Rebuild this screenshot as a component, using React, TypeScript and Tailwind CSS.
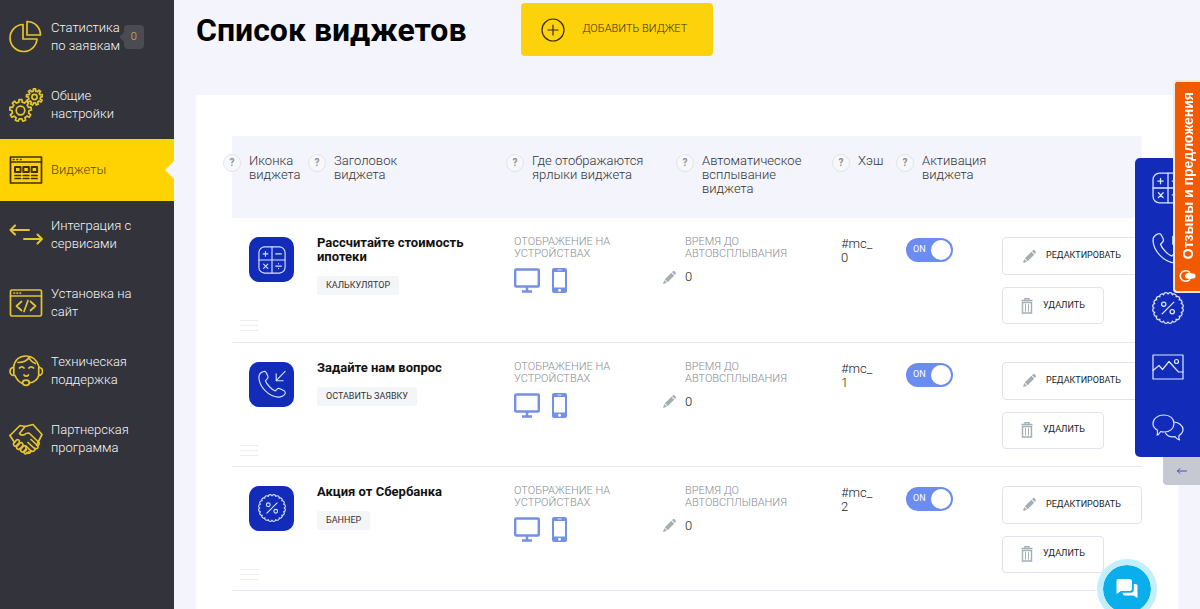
import { useState, type ReactNode } from "react"

type WidgetKind = "calc" | "call" | "percent"

interface Widget {
  id: number
  title: string
  type: string
  kind: WidgetKind
}

const widgets: Widget[] = [
  { id: 0, title: "Рассчитайте стоимость ипотеки", type: "Калькулятор", kind: "calc" },
  { id: 1, title: "Задайте нам вопрос", type: "Оставить заявку", kind: "call" },
  { id: 2, title: "Акция от Сбербанка", type: "Баннер", kind: "percent" },
]

// points for round shapes with a wavy or toothed edge
function scallop(c: number, r: number, count: number) {
  const at = (i: number) => {
    const a = (i / count) * Math.PI * 2
    return `${(c + r * Math.cos(a)).toFixed(2)} ${(c + r * Math.sin(a)).toFixed(2)}`
  }
  const bump = ((Math.PI * r) / count) * 1.02
  let d = `M${at(0)}`
  for (let i = 1; i <= count; i++) d += `A${bump.toFixed(2)} ${bump.toFixed(2)} 0 0 1 ${at(i)}`
  return d + "Z"
}

function gear(cx: number, cy: number, inner: number, outer: number, teeth: number) {
  const step = (Math.PI * 2) / teeth
  const pt = (r: number, a: number) => `${(cx + r * Math.cos(a)).toFixed(2)} ${(cy + r * Math.sin(a)).toFixed(2)}`
  const parts: string[] = []
  for (let i = 0; i < teeth; i++) {
    const a = i * step - Math.PI / 2
    parts.push(pt(inner, a - step * 0.28), pt(outer, a - step * 0.19), pt(outer, a + step * 0.19), pt(inner, a + step * 0.28))
  }
  return `M${parts.join("L")}Z`
}

function LineIcon({ children, className, box = 34, stroke = 1.7 }: { children: ReactNode; className: string; box?: number; stroke?: number }) {
  return (
    <svg
      viewBox={`0 0 ${box} ${box}`}
      className={className}
      fill="none"
      stroke="currentColor"
      strokeWidth={stroke}
      strokeLinecap="round"
      strokeLinejoin="round"
      aria-hidden="true"
    >
      {children}
    </svg>
  )
}

const menuIcons = {
  stats: (
    <>
      <path d="M14 4.500A13.500 13.500 0 1 0 28 19H14Z" />
      <path d="M18 1.500V15H31.500A13.500 13.500 0 0 0 18 1.500Z" />
    </>
  ),
  settings: (
    <>
      <path d={gear(11.5, 22.5, 8.5, 11, 9)} />
      <circle cx="11.5" cy="22.5" r="4.3" />
      <path d={gear(25.5, 9, 6, 8.2, 9)} />
      <circle cx="25.5" cy="9" r="2.6" />
    </>
  ),
  widgets: (
    <>
      <path d="M1.500 4H32.500V30H1.500Z" />
      <path d="M1.500 9H32.500M4.500 6.500H5M8 6.500H8.500M11.500 6.500H12" />
      <path d="M6 14H11.500V19H6ZM14.300 14H19.800V19H14.300ZM22.600 14H28.100V19H22.600Z" strokeWidth="2" />
      <path d="M6 22.500H11.500M14.300 22.500H19.800M22.600 22.500H28.100M6 25.500H11.500M14.300 25.500H19.800M22.600 25.500H28.100" />
    </>
  ),
  integration: <path d="M20 12H1.500M6 7.500L1.500 12L6 16.500M15 21H33M28.500 16.500L33 21L28.500 25.500" strokeWidth="2" />,
  install: (
    <>
      <rect x="1.5" y="4" width="31" height="26" rx="1.5" />
      <path d="M1.500 10H32.500M5 7H5.500M8 7H8.500M11 7H11.500M12.500 15.500L7.500 20L12.500 24.500M21.500 15.500L26.500 20L21.500 24.500M19 14.500L15 25.500" />
    </>
  ),
  support: (
    <>
      <path d="M4.500 13C6 5.500 11 2 17 2S28 6 30 13M6 21.500C7.500 25 9.500 27.500 12.500 29M30 21C28.500 25.500 25 28.500 20 29" />
      <path d="M4.800 13.500C2 13.500 1 15.500 1 17.500S2.500 21.500 4.800 21.500ZM29.700 13.500C32.500 13.500 33.500 15.500 33.500 17.500S32 21.500 29.700 21.500Z" />
      <path d="M9 8.500C14 8.500 18 7 20 3.500C21 6 23 8 26.500 9.500" />
      <path d="M10.500 14C11.500 12.500 14 12.500 15 14M20 14C21 12.500 23.500 12.500 24.500 14M15 21C16 22.500 18.500 22.500 19.500 21" />
      <ellipse cx="17" cy="28.8" rx="3.4" ry="2.6" />
    </>
  ),
  partner: (
    <>
      <path d="M1 13.500L11 3.500L16 4.500L24 2.500L33 12.500L28.500 21.500" />
      <path d="M16 4.500L10.500 11.500C12 14 15 13.500 17 11.500L20 11L30 20.500C31 22.500 29 24 27.500 23" />
      <path d="M1 13.500L5.500 20.500M22 17.500L29 24C29.500 26.500 27 27.500 25.500 26M19 20.500L26 27C26 29.500 23.500 30 22 28.500M17 24L22 29C21.500 31.500 19.500 31.500 18 30.500" />
      <path d="M7.500 18L4.500 21.500C4 24 6.500 25 7.500 23.500L10.500 20.500C10.500 18 9 17 7.500 18ZM11 21L7.500 25C7.500 27.500 10 28 11 26.500L14 23.500C14 21 12.500 20 11 21ZM14.500 24L11.500 27.500C11.500 30 13.500 30.500 14.500 29.500L17 27C17.500 25 16 23 14.500 24ZM17.500 27.500L15 30.500C15.500 32.500 17.500 32 18.500 31L20 29.500" />
    </>
  ),
}

const menu: { label: string[]; icon: keyof typeof menuIcons; count?: number; active?: boolean }[] = [
  { label: ["Статистика", "по заявкам"], icon: "stats", count: 0 },
  { label: ["Общие", "настройки"], icon: "settings" },
  { label: ["Виджеты"], icon: "widgets", active: true },
  { label: ["Интеграция с", "сервисами"], icon: "integration" },
  { label: ["Установка на", "сайт"], icon: "install" },
  { label: ["Техническая", "поддержка"], icon: "support" },
  { label: ["Партнерская", "программа"], icon: "partner" },
]

const columns = [
  { label: ["Иконка", "виджета"], width: "w-[68px]" },
  { label: ["Заголовок", "виджета"], width: "w-[198px]" },
  { label: ["Где отображаются", "ярлыки виджета"], width: "w-[170px]" },
  { label: ["Автоматическое", "всплывание", "виджета"], width: "w-[156px]" },
  { label: ["Хэш"], width: "w-[64px]" },
  { label: ["Активация", "виджета"], width: "w-[98px]" },
]

function Lines({ items }: { items: string[] }) {
  return (
    <>
      {items.map((line) => (
        <span key={line} className="block whitespace-nowrap">
          {line}
        </span>
      ))}
    </>
  )
}

function WidgetGlyph({ kind, className }: { kind: WidgetKind; className: string }) {
  return (
    <LineIcon className={className} box={30} stroke={1.2}>
      {kind === "calc" && (
        <>
          <rect x="1" y="1" width="28" height="28" rx="6" />
          <path d="M15 1V29M1 15H29M5.500 8.500H10.500M8 6V11M19 8.500H25M6 19.500L10.500 24M10.500 19.500L6 24M19 21.500H25M22 18.800V19M22 24V24.200" />
        </>
      )}
      {kind === "call" && (
        <>
          <path d="M5 2C2.500 3 .800 5.500 1 8.500C1.500 18 11.500 28.500 21.500 29C24.500 29.200 28 27.500 29 25.500C29.500 24 29 22.800 27.500 22L23.500 20C22 19.300 21 19.600 20.200 20.700L18.500 22.500C15 21.500 9 15 8 11.500L9.800 9.600C10.800 8.600 11 7.500 10.500 6.300L8.700 2.800C8 1.500 6.500 1.300 5 2Z" />
          <path d="M29 1.500L19.500 11.500M19.500 4V11.500H27" />
        </>
      )}
      {kind === "percent" && (
        <>
          <path d={scallop(15, 13, 20)} />
          <path d="M20.500 9.500L9.500 20.500" />
          <circle cx="11" cy="11.5" r="2" />
          <circle cx="19" cy="18.5" r="2" />
        </>
      )}
    </LineIcon>
  )
}

function PencilIcon() {
  return (
    <svg viewBox="0 0 14 14" className="h-[13px] w-[13px] shrink-0 text-[#a5aeb2]" fill="currentColor" aria-hidden="true">
      <path d="M0 14L1.300 9.800L4.200 12.700ZM2 9L9 2L12 5L5 12ZM9.800 1.300L10.700.400C11.200-.1 12-.1 12.500.4L13.600 1.500C14.100 2 14.100 2.800 13.600 3.300L12.700 4.200Z" />
    </svg>
  )
}

function TrashIcon() {
  return (
    <svg viewBox="0 0 12 16" className="h-4 w-3 shrink-0 text-[#a3afb5]" fill="none" stroke="currentColor" aria-hidden="true">
      <path d="M.5 2.500H11.500M4 2V.700H8V2" strokeWidth="1.3" />
      <path d="M1.500 4.500H10.500V15H1.500Z" strokeWidth="1.4" />
      <path d="M4.500 6V13.500M7.500 6V13.500" />
    </svg>
  )
}

function Devices() {
  return (
    <div className="mt-2 flex gap-3 text-[#7490e6]">
      <svg viewBox="0 0 26 25" className="h-[25px] w-[26px]" fill="none" stroke="currentColor" role="img" aria-label="Компьютер">
        <rect x="1.2" y="1.5" width="23.6" height="17" rx="1" strokeWidth="2.4" />
        <path d="M13 19V23M8 23.500H18" strokeWidth="2.5" />
      </svg>
      <svg viewBox="0 0 15 25" className="h-[25px] w-[15px]" role="img" aria-label="Телефон">
        <rect width="15" height="25" rx="2" fill="currentColor" />
        <path d="M2 4H13V19.500H2Z" fill="#fff" />
        <path d="M5.500 2H9.500" stroke="#fff" strokeWidth=".8" />
        <circle cx="7.5" cy="22.2" r="1.5" fill="#fff" />
      </svg>
    </div>
  )
}

function Sidebar() {
  return (
    <aside className="w-[174px] shrink-0 bg-[#32333b] pt-[3px]">
      <nav>
        {menu.map((item) => (
          <a
            key={item.icon}
            href="#"
            className={`relative flex items-center gap-2 pl-[9px] text-[13px] leading-[18px] font-light ${
              item.active ? "min-h-[62px] bg-[#ffd302] text-[#5b4612]" : "min-h-[68px] text-[#f6f6f6]"
            }`}
          >
            <LineIcon className={`h-[34px] w-[34px] shrink-0 ${item.active ? "text-[#40300c]" : "text-[#e5c52c]"}`}>
              {menuIcons[item.icon]}
            </LineIcon>
            <span>
              <Lines items={item.label} />
            </span>
            {item.count !== undefined && (
              <span className="relative -ml-1 flex h-6 w-5 items-center justify-center rounded bg-[#4b4c52] text-[11px] text-[#dcc04a]">
                <span className="absolute -left-[3px] h-2 w-2 rotate-45 bg-[#4b4c52]" />
                <span className="relative">{item.count}</span>
              </span>
            )}
            {item.active && (
              <svg viewBox="0 0 9 18" className="absolute right-0 h-[18px] w-[9px]" aria-hidden="true">
                <path d="M9 0L0 9L9 18Z" fill="#f3f4fc" />
              </svg>
            )}
          </a>
        ))}
      </nav>
    </aside>
  )
}

function HelpButton() {
  return (
    <button
      type="button"
      aria-label="Подсказка"
      className="flex h-[18px] w-[18px] shrink-0 items-center justify-center rounded-full border border-[#e3e3ea] bg-[#f8f8fb] text-[10px] font-bold leading-none text-[#8c8c92]"
    >
      ?
    </button>
  )
}

function Toggle({ label }: { label: string }) {
  const [on, setOn] = useState(true)

  return (
    <label
      className={`mt-[2px] flex h-6 w-[47px] cursor-pointer items-center justify-between rounded-full p-[2px] text-[9px] text-white ${
        on ? "bg-[#6b8cf0] pl-[7px]" : "flex-row-reverse bg-gray-300 pr-[5px]"
      }`}
    >
      <input type="checkbox" aria-label={label} checked={on} onChange={() => setOn(!on)} className="sr-only" />
      {on ? "ON" : "OFF"}
      <span className="h-5 w-5 rounded-full bg-white" />
    </label>
  )
}

function WidgetRow({ widget }: { widget: Widget }) {
  return (
    <tr className="h-[124px] border-b border-[#e6e7ef] align-top">
      <td className="pt-[19px] pl-2">
        <div className="ml-[9px] flex h-[45px] w-[45px] items-center justify-center rounded-[10px] bg-[#122cb9] text-[#d6e2ff]">
          <WidgetGlyph kind={widget.kind} className="h-7 w-7" />
        </div>
        <button type="button" aria-label="Переместить" className="mt-[38px] flex h-[11px] w-[18px] flex-col justify-between">
          <span className="h-px w-full bg-[#ececf3]" />
          <span className="h-px w-full bg-[#ececf3]" />
          <span className="h-px w-full bg-[#ececf3]" />
        </button>
      </td>
      <td className="pt-[18px] pr-8 pl-[17px]">
        <h2 className="text-[13px] leading-[14px] font-bold text-[#111]">{widget.title}</h2>
        <span className="mt-3 inline-block rounded-[3px] bg-[#f4f5f9] px-[9px] text-[9px] leading-[19px] text-[#333] uppercase">
          {widget.type}
        </span>
      </td>
      <td className="pt-[18px] pl-[16px]">
        <p className="text-[11px] leading-[12px] font-light text-[#8b8b90] uppercase">
          <Lines items={["Отображение на", "устройствах"]} />
        </p>
        <Devices />
      </td>
      <td className="pt-[18px] pl-[17px]">
        <p className="text-[11px] leading-[12px] font-light text-[#8b8b90] uppercase">
          <Lines items={["Время до", "автовсплывания"]} />
        </p>
        <div className="mt-[9px] -ml-[22px] flex items-center gap-[9px] text-[13px] leading-4 font-light text-[#222]">
          <button type="button" aria-label="Изменить время">
            <PencilIcon />
          </button>
          0
        </div>
      </td>
      <td className="pt-[19px] pl-[17px] text-[13px] leading-[14px] font-light text-[#222]">
        <Lines items={["#mc_", String(widget.id)]} />
      </td>
      <td className="pt-[18px] pl-[18px]">
        <Toggle label={widget.title} />
      </td>
      <td className="pt-[19px] pl-4">
        <div className="flex flex-col items-start gap-3 text-[9px] text-[#222]">
          <button
            type="button"
            className="flex h-[38px] w-full items-center gap-[10px] rounded border border-[#e1e2ec] bg-white pl-5 uppercase"
          >
            <PencilIcon />
            Редактировать
          </button>
          <button
            type="button"
            className="flex h-[37px] items-center gap-[10px] rounded border border-[#e1e2ec] bg-white px-[18px] uppercase"
          >
            <TrashIcon />
            Удалить
          </button>
        </div>
      </td>
    </tr>
  )
}

function WidgetPanel() {
  return (
    <div className="fixed top-[158px] right-0 flex flex-col items-end">
      <div className="flex h-[299px] w-[65px] flex-col items-center justify-between rounded-l-[5px] bg-[#122cb9] py-[14px] text-[#dbe6ff]">
        <button type="button" aria-label="Калькулятор">
          <WidgetGlyph kind="calc" className="h-8 w-8" />
        </button>
        <button type="button" aria-label="Звонок">
          <WidgetGlyph kind="call" className="h-8 w-8" />
        </button>
        <button type="button" aria-label="Акция">
          <WidgetGlyph kind="percent" className="h-8 w-8" />
        </button>
        <button type="button" aria-label="Галерея">
          <LineIcon className="h-8 w-8" box={32} stroke={1.2}>
            <path d="M1 4H31V28H1Z" />
            <path d="M1 19.500L7 14.500L10.500 18.500L17 10.500L26.500 21H31" />
            <circle cx="24.5" cy="10.5" r="2" />
          </LineIcon>
        </button>
        <button type="button" aria-label="Чат">
          <LineIcon className="h-8 w-8" box={32} stroke={1.2}>
            <path d="M12 4C18 4 22 7.500 22 12.500S18 21 12 21C10.800 21 9.700 20.800 8.700 20.500C7.500 22.500 6 24 5 24.200C5.700 22.500 5.800 21 5.300 19C2.500 17.500 1 15 1 12.500C1 7.500 6 4 12 4Z" />
            <path d="M22 11C27 11.500 31 14.500 31 18.500C31 21 29.500 23 27 24.500C26.500 26.500 27 28 27.500 29C25.500 28.500 24 27 23.200 25.700C19 26.200 15 25 13.500 22" />
          </LineIcon>
        </button>
      </div>
      <button type="button" aria-label="Свернуть" className="flex h-7 w-[37px] items-center justify-center rounded-bl bg-[#c6c8d2] text-[#4251b4]">
        <LineIcon className="h-[10px] w-[10px]" box={10} stroke={1}>
          <path d="M9.500 5H.500M3 2.500L.500 5L3 7.500" />
        </LineIcon>
      </button>
    </div>
  )
}

function FeedbackTab() {
  return (
    <a
      href="#"
      className="fixed top-20 right-0 flex h-[213px] w-[27px] flex-col items-center justify-between rounded-l-[4px] border-2 border-r-0 border-[#f7e8dc] bg-[#f15a00] pt-[10px] pb-[9px] text-white"
    >
      <span className="rotate-180 font-['Liberation_Sans',sans-serif] text-[14px] leading-4 font-bold whitespace-nowrap [writing-mode:vertical-rl]">
        Отзывы и предложения
      </span>
      <svg viewBox="0 0 17 12" className="h-3 w-[17px]" fill="none" stroke="currentColor" aria-hidden="true">
        <path d="M11 2.500C9.500 1 8 .800 6.500.800A5.200 5.200 0 0 0 6.500 11.200C8 11.200 9.500 11 11 9.500" strokeWidth="1.5" />
        <path d="M7 4C9 2.500 12 2.500 13 3.500H15L16.500 5V7L15 8.500H13C12 9.500 9 9.500 7 8C5.500 7 5.500 5 7 4Z" fill="currentColor" stroke="none" />
      </svg>
    </a>
  )
}

function ChatButton() {
  return (
    <button
      type="button"
      aria-label="Открыть чат"
      className="fixed right-[43px] -bottom-[10px] flex h-[60px] w-[60px] items-center justify-center rounded-full border-[6px] border-[#c3effc] bg-[#09aeea] bg-clip-padding"
    >
      <svg viewBox="0 0 24 22" className="h-[22px] w-6" fill="#fff" aria-hidden="true">
        <path d="M3 1H14.500Q17 1 17 3.500V10.500Q17 13 14.500 13H6L1.500 16V3Q1.500 1 3 1Z" />
        <path d="M18.800 6H20.500Q22.500 6 22.500 8V20L18.500 17.500H9.500Q8 17.500 7.500 14.800H15.500Q18.800 14.800 18.800 11.500Z" />
      </svg>
    </button>
  )
}

export default function App() {
  return (
    <div className="flex min-h-screen bg-[#f3f4fc] font-[Roboto,sans-serif]">
      <Sidebar />

      <main className="flex min-w-0 flex-1 flex-col px-[22px] pt-[3px]">
        <header className="mb-[39px] flex items-center gap-[55px]">
          <h1 className="text-[32px] leading-10 font-bold text-black">Список виджетов</h1>
          <button
            type="button"
            className="flex h-[53px] items-center gap-[17px] rounded bg-[#fdd20a] pr-[26px] pl-[20px] text-[11px] font-light text-[#3a2c05] uppercase"
          >
            <LineIcon className="h-6 w-6" box={24} stroke={1.2}>
              <circle cx="12" cy="12" r="11" />
              <path d="M12 7V17M7 12H17" />
            </LineIcon>
            Добавить виджет
          </button>
        </header>

        <section className="flex-1 bg-white px-9 pt-[41px]">
          <table className="w-full table-fixed">
            <thead>
              <tr className="h-[82px] bg-[#f3f4fc] align-top">
                {columns.map((col, i) => (
                  <th key={i} scope="col" className={`pt-[18px] text-left text-[13px] leading-[14px] font-light text-[#333] ${col.width}`}>
                    <div className={`flex gap-2 ${i === 0 ? "-ml-[9px]" : "ml-2"}`}>
                      <HelpButton />
                      <span>
                        <Lines items={col.label} />
                      </span>
                    </div>
                  </th>
                ))}
                <td />
              </tr>
            </thead>
            <tbody>
              {widgets.map((widget) => (
                <WidgetRow key={widget.id} widget={widget} />
              ))}
            </tbody>
          </table>
        </section>
      </main>

      <WidgetPanel />
      <FeedbackTab />
      <ChatButton />
    </div>
  )
}
